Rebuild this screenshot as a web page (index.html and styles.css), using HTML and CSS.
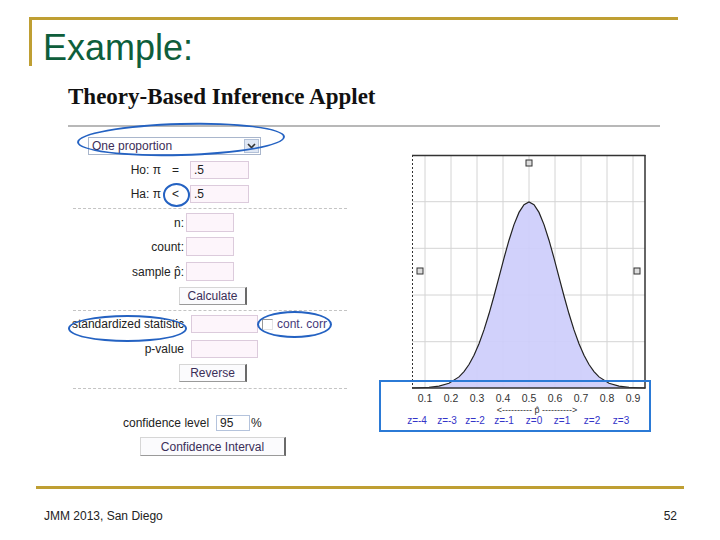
FILE: index.html
```html
<!DOCTYPE html>
<html>
<head>
<meta charset="utf-8">
<link rel="stylesheet" href="styles.css">
</head>
<body>
<div class="slide">
  <header class="head"><h1 class="title">Example:</h1></header>
  <section class="applet">
    <h2 class="app-title">Theory-Based Inference Applet</h2>
    <div class="rule"></div>
    <div class="cols">
      <div class="form">
        <div class="row sel-row">
          <div class="select"><span class="sel-text">One proportion</span><span class="sel-btn"><svg width="9" height="6" viewBox="0 0 9 6"><path d="M1 1 L4.5 4.5 L8 1" fill="none" stroke="#333" stroke-width="1.6"/></svg></span></div>
        </div>
        <div class="row hyp-row m6">
          <span class="hlabel">Ho: π</span><span class="op">=</span><span class="inp w59">.5</span>
        </div>
        <div class="row hyp-row m6">
          <span class="hlabel">Ha: π</span><span class="op">&lt;</span><span class="inp w59">.5</span>
        </div>
        <div class="dash m5"></div>
        <div class="row data-row m4"><span class="dlabel">n:</span><span class="inp w48"></span></div>
        <div class="row data-row m5"><span class="dlabel">count:</span><span class="inp w48"></span></div>
        <div class="row data-row m6"><span class="dlabel">sample p̂:</span><span class="inp w48"></span></div>
        <div class="row btn-row m6"><span class="btn b-calc">Calculate</span></div>
        <div class="dash m5"></div>
        <div class="row stat-row m4"><span class="slabel">standardized statistic</span><span class="inp w67"></span><span class="chk"></span><span class="cc">cont. corr</span></div>
        <div class="row stat-row m7"><span class="slabel">p-value</span><span class="inp w67"></span></div>
        <div class="row btn-row m6"><span class="btn b-calc">Reverse</span></div>
        <div class="dash m6"></div>
        <div class="row conf-row"><span class="clabel">confidence level</span><span class="inp inp-blue w34">95</span><span class="pct">%</span></div>
        <div class="row ci-row m6"><span class="btn b-ci">Confidence Interval</span></div>
        <span class="ell ell-sel"></span>
        <span class="ell ell-op"></span>
        <span class="ell ell-stat"></span>
        <span class="ell ell-cc"></span>
      </div>
      <div class="chart">
        <svg class="plot" width="240" height="272" viewBox="0 0 240 272">
          <g stroke="#d4d4d4" stroke-width="1">
            <line x1="13" y1="0" x2="13" y2="233"/>
            <line x1="39" y1="0" x2="39" y2="233"/>
            <line x1="65" y1="0" x2="65" y2="233"/>
            <line x1="91" y1="0" x2="91" y2="233"/>
            <line x1="117" y1="0" x2="117" y2="233"/>
            <line x1="143" y1="0" x2="143" y2="233"/>
            <line x1="169" y1="0" x2="169" y2="233"/>
            <line x1="195" y1="0" x2="195" y2="233"/>
            <line x1="221" y1="0" x2="221" y2="233"/>
            <line x1="0" y1="46.7" x2="233" y2="46.7"/>
            <line x1="0" y1="93.3" x2="233" y2="93.3"/>
            <line x1="0" y1="140" x2="233" y2="140"/>
            <line x1="0" y1="186.7" x2="233" y2="186.7"/>
          </g>
          <polygon fill="#cdcdfb" fill-opacity="0.92" points="0,233 17,232.4 27,231.2 37,228.3 47,221.9 52,216.6 57,209.5 62,200.3 67,188.8 72,174.9 77,158.8 82,141 87,122.1 92,103.1 97,85.2 102,69.6 107,57.4 112,49.7 117,47 122,49.7 127,57.4 132,69.6 137,85.2 142,103.1 147,122.1 152,141 157,158.8 162,174.9 167,188.8 172,200.3 177,209.5 182,216.6 187,221.9 197,228.3 207,231.2 217,232.4 233,233"/>
          <polyline fill="none" stroke="#222" stroke-width="1.2" points="0,233 17,232.4 27,231.2 37,228.3 47,221.9 52,216.6 57,209.5 62,200.3 67,188.8 72,174.9 77,158.8 82,141 87,122.1 92,103.1 97,85.2 102,69.6 107,57.4 112,49.7 117,47 122,49.7 127,57.4 132,69.6 137,85.2 142,103.1 147,122.1 152,141 157,158.8 162,174.9 167,188.8 172,200.3 177,209.5 182,216.6 187,221.9 197,228.3 207,231.2 217,232.4 233,233"/>
          <line x1="0" y1="0.5" x2="233.5" y2="0.5" stroke="#333" stroke-width="1.5"/>
          <line x1="233" y1="0" x2="233" y2="233.5" stroke="#333" stroke-width="1.5"/>
          <line x1="0" y1="233" x2="233.5" y2="233" stroke="#333" stroke-width="1.5"/>
          <line x1="0.5" y1="0" x2="0.5" y2="233" stroke="#333" stroke-width="1" stroke-dasharray="2 2"/>
          <rect x="114" y="5" width="6" height="6" fill="#ddd" stroke="#333" stroke-width="1"/>
          <rect x="5" y="113" width="6" height="6" fill="#ddd" stroke="#333" stroke-width="1"/>
          <rect x="222" y="113" width="6" height="6" fill="#ddd" stroke="#333" stroke-width="1"/>
          <g class="ax" text-anchor="middle">
            <text x="13" y="247">0.1</text>
            <text x="39" y="247">0.2</text>
            <text x="65" y="247">0.3</text>
            <text x="91" y="247">0.4</text>
            <text x="117" y="247">0.5</text>
            <text x="143" y="247">0.6</text>
            <text x="169" y="247">0.7</text>
            <text x="195" y="247">0.8</text>
            <text x="221" y="247">0.9</text>
          </g>
          <text class="arrow" x="125" y="258" text-anchor="middle">&lt;---------- p̂ ----------&gt;</text>
          <g class="zl" text-anchor="middle">
            <text x="5" y="269">z=-4</text>
            <text x="35" y="269">z=-3</text>
            <text x="63" y="269">z=-2</text>
            <text x="92" y="269">z=-1</text>
            <text x="122" y="269">z=0</text>
            <text x="150" y="269">z=1</text>
            <text x="180" y="269">z=2</text>
            <text x="209" y="269">z=3</text>
          </g>
        </svg>
        <span class="zbox"></span>
      </div>
    </div>
  </section>
  <footer class="foot"><span>JMM 2013, San Diego</span><span>52</span></footer>
</div>
</body>
</html>
```
FILE: styles.css
```css
* { box-sizing: border-box; }
html, body { margin: 0; padding: 0; background: #fff; }
body { font-family: "Liberation Sans", Arial, sans-serif; }
.slide {
  width: 720px; height: 540px; display: flex; flex-direction: column;
  overflow: hidden; background: #fff;
}
.head {
  margin: 17px 0 0 29px; width: 649px; height: 49px;
  border-top: 3px solid #bf9f33; border-left: 3px solid #bf9f33;
}
.title {
  margin: 0; padding: 8px 0 0 11px; font-weight: normal;
  font-size: 36px; line-height: 40px; color: #0e5e3b;
}
.applet { margin-left: 68px; }
.app-title {
  margin: 18px 0 0 0; font-family: "Liberation Serif", "Times New Roman", serif;
  font-weight: bold; font-size: 23px; line-height: 26px; color: #111;
}
.rule { margin-top: 15px; width: 592px; height: 2px; background: #b8b8b8; }
.cols { display: flex; align-items: flex-start; }
.form { position: relative; width: 282px; font-size: 12px; color: #222; }
.row { display: flex; align-items: center; }
.m4 { margin-top: 4px; } .m5 { margin-top: 5px; } .m6 { margin-top: 6px; } .m7 { margin-top: 7px; }
.sel-row { margin-top: 10px; height: 18px; padding-left: 20px; }
.select {
  width: 173px; height: 18px; border: 1px solid #a9b6cc; display: flex;
  align-items: center; justify-content: space-between; background: #fff;
}
.sel-text { padding-left: 3px; color: #3c2d58; font-size: 12px; }
.sel-btn {
  width: 15px; height: 14px; margin-right: 1px; background: #dfe7f4;
  border: 1px solid #b3c1d8; display: flex; align-items: center; justify-content: center;
}
.hyp-row { height: 18px; }
.hlabel { width: 93px; text-align: right; }
.op { width: 29px; text-align: center; }
.inp {
  display: flex; align-items: center; padding-left: 3px; height: 18px;
  border: 1px solid #dccbdc; background: #fdf5fb; color: #222;
}
.w59 { width: 59px; } .w48 { width: 48px; height: 19px; } .w67 { width: 67px; } .w34 { width: 34px; height: 16px; }
.inp-blue { border-color: #b4c3dc; background: #fff; }
.dash { margin-left: 5px; width: 274px; border-top: 1px dashed #c4c4c4; }
.data-row { height: 19px; }
.dlabel { width: 116px; text-align: right; margin-right: 2px; }
.btn-row { height: 18px; padding-left: 111px; }
.btn {
  display: flex; align-items: center; justify-content: center; color: #3a2e58;
  background: #fbfbfd; border: 1px solid #d6d6d6; border-right: 2px solid #6a6a6a;
  border-bottom: 1px solid #9a9a9a;
}
.b-calc { width: 68px; height: 18px; }
.stat-row { height: 18px; }
.slabel { width: 116px; text-align: right; margin-right: 7px; white-space: nowrap; }
.chk {
  width: 11px; height: 11px; margin-left: 4px; border-top: 1px solid #999;
  border-left: 1px solid #999; border-right: 1px solid #e4e4e4; border-bottom: 1px solid #e4e4e4;
}
.cc { margin-left: 4px; color: #46397a; }
.conf-row { margin-top: 26px; height: 16px; padding-left: 55px; }
.clabel { margin-right: 7px; }
.pct { margin-left: 1px; }
.ci-row { height: 19px; padding-left: 72px; }
.b-ci { width: 146px; height: 19px; }
.ell { position: absolute; border: 2px solid #2462c2; border-radius: 50%; }
.ell-sel { left: 9px; top: -4px; width: 208px; height: 33px; transform: rotate(-1.5deg); }
.ell-op { left: 95px; top: 56px; width: 27px; height: 24px; }
.ell-stat { left: 0px; top: 188px; width: 119px; height: 27px; }
.ell-cc { left: 189px; top: 184px; width: 75px; height: 27px; }
.chart { position: relative; margin: 28px 0 0 62px; }
.plot { display: block; overflow: visible; font-family: "Liberation Sans", Arial, sans-serif; }
.ax { font-size: 10.5px; fill: #333; }
.arrow { font-size: 9px; fill: #333; }
.zl { font-size: 10px; fill: #3434c8; }
.zbox {
  position: absolute; left: -33px; top: 225px; width: 272px; height: 52px;
  border: 2px solid #2b7ad6;
}
.foot {
  margin: auto 36px 0 36px; height: 54px; border-top: 3px solid #bf9f33;
  display: flex; justify-content: space-between; padding: 20px 7px 0 8px;
  font-size: 12px; line-height: 14px; color: #222;
}
```
